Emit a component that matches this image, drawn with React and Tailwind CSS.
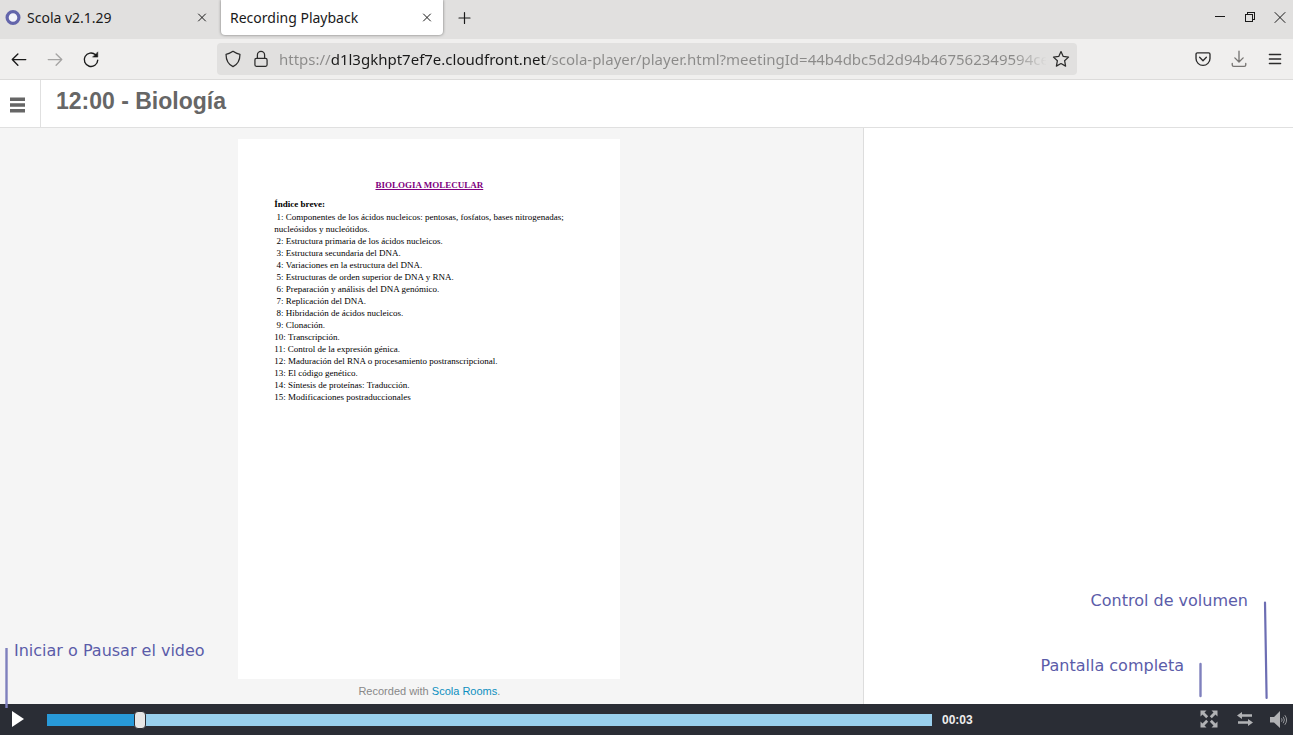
import { useState } from "react";

const chapters = [
  "Componentes de los ácidos nucleicos: pentosas, fosfatos, bases nitrogenadas; nucleósidos y nucleótidos.",
  "Estructura primaria de los ácidos nucleicos.",
  "Estructura secundaria del DNA.",
  "Variaciones en la estructura del DNA.",
  "Estructuras de orden superior de DNA y RNA.",
  "Preparación y análisis del DNA genómico.",
  "Replicación del DNA.",
  "Hibridación de ácidos nucleicos.",
  "Clonación.",
  "Transcripción.",
  "Control de la expresión génica.",
  "Maduración del RNA o procesamiento postranscripcional.",
  "El código genético.",
  "Síntesis de proteínas: Traducción.",
  "Modificaciones postraduccionales",
];

function Icon({ className = "h-4 w-4", width = 1.2, children }) {
  return (
    <svg
      viewBox="0 0 16 16"
      className={className}
      fill="none"
      stroke="currentColor"
      strokeWidth={width}
      strokeLinecap="round"
      strokeLinejoin="round"
      aria-hidden="true"
    >
      {children}
    </svg>
  );
}

function CloseIcon() {
  return (
    <Icon className="block h-4 w-4" width={1}>
      <path d="M4.500 4l7 7M11.500 4l-7 7" />
    </Icon>
  );
}

function TabBar() {
  return (
    <div className="flex h-[39px] shrink-0 items-start bg-[#e1e0df] text-sm text-[#1a1a1a]">
      <div className="flex h-[35px] w-[221px] items-center pr-[11px] pl-[5px]">
        <svg viewBox="0 0 16 16" className="h-4 w-4" aria-hidden="true">
          <circle cx="8" cy="7.500" r="5.900" fill="#f4f4fa" stroke="#6365ab" strokeWidth="3.200" />
        </svg>
        <span className="ml-[6px] flex-1">Scola v2.1.29</span>
        <button aria-label="Cerrar Scola">
          <CloseIcon />
        </button>
      </div>
      <div className="flex h-[35px] w-[222px] items-center rounded-b bg-white pr-2 pl-[9px] shadow-[0_0_3px_rgba(0,0,0,0.5)]">
        <span className="flex-1">Recording Playback</span>
        <button aria-label="Cerrar Recording Playback">
          <CloseIcon />
        </button>
      </div>
      <button className="ml-[13px] flex h-[35px] items-center" aria-label="Nueva pestaña">
        <Icon>
          <path d="M8.500 2.500v11M3 8h11" />
        </Icon>
      </button>
      <div className="ml-auto flex h-[34px] items-center gap-[14px] pr-[5px]">
        <button aria-label="Minimizar">
          <svg viewBox="0 0 16 16" className="block h-4 w-4" shapeRendering="crispEdges" aria-hidden="true">
            <path d="M3 7h10v1H3z" fill="currentColor" />
          </svg>
        </button>
        <button aria-label="Restaurar">
          <svg viewBox="0 0 16 16" className="block h-4 w-4" shapeRendering="crispEdges" fill="none" stroke="currentColor" aria-hidden="true">
            <path d="M3.500 5.500h7v7h-7zM5.500 5.500v-2h7v7h-2" />
          </svg>
        </button>
        <button aria-label="Cerrar ventana">
          <Icon className="block h-4 w-4" width={1}>
            <path d="M3 3.500l10 10M13 3.500l-10 10" />
          </Icon>
        </button>
      </div>
    </div>
  );
}

function AddressBar() {
  return (
    <div className="flex h-[41px] shrink-0 items-center border-b border-[#dcdbda] bg-[#f0efee] text-[#2b2b2b]">
      <div className="flex items-center gap-[18px] pl-[10px]">
        <button aria-label="Atrás">
          <Icon className="block h-[18px] w-[18px] text-[#1a1a1a]">
            <path d="M14 8.500H2M7 3.500l-5 5 5 5" />
          </Icon>
        </button>
        <button aria-label="Adelante" className="text-[#a5a4a3]" disabled>
          <Icon className="block h-[18px] w-[18px]">
            <path d="M2 8.500h12M9 3.500l5 5-5 5" />
          </Icon>
        </button>
        <button aria-label="Recargar">
          <Icon className="block h-[18px] w-[18px] text-[#1a1a1a]">
            <path d="M14 9A6 6 0 1 1 12 4.200" />
            <path d="M14 2v4.300H9.700z" fill="currentColor" strokeWidth="0.500" />
          </Icon>
        </button>
      </div>
      <div className="ml-[117px] flex h-8 w-[860px] items-center rounded bg-[#e1e0df] px-[7px]">
        <Icon className="h-[18px] w-[18px] shrink-0" width={1.1}>
          <path d="M8 1.200C10 2.700 12 3.500 14.200 3.800 14.200 9 12.700 12.600 8 14.800 3.300 12.600 1.800 9 1.800 3.800 4 3.500 6 2.700 8 1.200z" />
        </Icon>
        <Icon className="ml-[10px] h-[18px] w-[18px] shrink-0" width={1.1}>
          <rect x="2.600" y="7.500" width="10.800" height="7" rx="1.300" />
          <path d="M4.800 7.500V4.400a3.200 3.200 0 0 1 6.400 0v3.100" />
        </Icon>
        <input
          type="text"
          aria-label="Dirección"
          defaultValue="https://d1l3gkhpt7ef7e.cloudfront.net/scola-player/player.html?meetingId=44b4dbc5d2d94b467562349594ce"
          className="ml-[9px] min-w-0 flex-1 bg-[linear-gradient(90deg,#8b8a89_52px,#1a1a1a_52px,#1a1a1a_267px,#8b8a89_267px,#8b8a89_735px,transparent_768px)] bg-clip-text text-[15px] text-transparent outline-none"
        />
        <button aria-label="Añadir a marcadores" className="ml-[6px]">
          <Icon className="block h-[18px] w-[18px]" width={1.1}>
            <path d="M8 1.400l2 4.300 4.700.6-3.500 3.200.9 4.800L8 12l-4.100 2.300.9-4.800L1.300 6.300 6 5.700z" />
          </Icon>
        </button>
      </div>
      <div className="ml-auto flex items-center gap-[18px] pr-[9px]">
        <button aria-label="Guardar en Pocket">
          <Icon className="block h-[18px] w-[18px]">
            <path d="M3 2.500h10a1.200 1.200 0 0 1 1.200 1.200V7.500a6.200 6.200 0 0 1-12.400 0V3.700A1.200 1.200 0 0 1 3 2.500z" />
            <path d="M5 6.500l3 3 3-3" />
          </Icon>
        </button>
        <button aria-label="Descargas" className="text-[#777573]">
          <Icon className="block h-[18px] w-[18px]">
            <path d="M8 1v9.500M4.300 7L8 10.700l3.700-3.700M2 12v1.300c0 .8.500 1.200 1.300 1.200h9.400c.8 0 1.300-.4 1.300-1.200V12" />
          </Icon>
        </button>
        <button aria-label="Menú del navegador">
          <Icon className="block h-[18px] w-[18px]">
            <path d="M3 4h10M3 8h10M3 12h10" />
          </Icon>
        </button>
      </div>
    </div>
  );
}

function Slide() {
  return (
    <article className="aspect-[382/540] min-h-0 flex-1 bg-white px-9 pt-10 font-['Liberation_Serif',serif] text-[9px] leading-3 text-black">
      <h2 className="text-center font-bold text-[#800080] underline">BIOLOGIA MOLECULAR</h2>
      <h3 className="mt-[7px] font-bold">Índice breve:</h3>
      <ol className="mt-px">
        {chapters.map((chapter, index) => (
          <li key={chapter} className="whitespace-pre-wrap">
            {`${index + 1}`.padStart(2, " ") + `: ${chapter}`}
          </li>
        ))}
      </ol>
    </article>
  );
}

function PlayerControls() {
  const [position, setPosition] = useState(10);
  const fill = position + 0.5;

  return (
    <div className="flex h-[31px] shrink-0 items-center bg-[#2a2d35] text-[#b1b2b5]">
      <button aria-label="Reproducir" className="ml-[11px] pb-[2px] text-white">
        <svg viewBox="0 0 14 18" className="block h-[18px] w-[14px]" fill="currentColor" aria-hidden="true">
          <path d="M1 1l12 8-12 8z" />
        </svg>
      </button>
      <input
        type="range"
        min="0"
        max="100"
        aria-label="Posición del video"
        value={position}
        onChange={(e) => setPosition(Number(e.target.value))}
        style={{ backgroundImage: `linear-gradient(to right, #289ad9 ${fill}%, #99d0ed ${fill}%)` }}
        className="ml-[22px] h-3 min-w-0 flex-1 appearance-none [&::-webkit-slider-thumb]:h-[18px] [&::-webkit-slider-thumb]:w-3 [&::-webkit-slider-thumb]:appearance-none [&::-webkit-slider-thumb]:rounded [&::-webkit-slider-thumb]:border [&::-webkit-slider-thumb]:border-[#2a2d35] [&::-webkit-slider-thumb]:bg-[#e6e6e6]"
      />
      <span className="ml-[10px] w-[258px] font-['Liberation_Sans',sans-serif] text-xs font-bold text-[#eeeeee]">
        00:03
      </span>
      <div className="flex items-center gap-[17px] pr-[5px] pb-[2px]">
        <button aria-label="Pantalla completa">
          <svg viewBox="0 0 18 18" className="block h-[18px] w-[18px]" fill="currentColor" aria-hidden="true">
            <path d="M.5.500h6L4.500 2.500l3.700 3.700-2 2L2.500 4.500l-2 2zM17.500.500v6l-2-2-3.700 3.700-2-2 3.700-3.700-2-2zM.5 17.500v-6l2 2 3.700-3.700 2 2-3.700 3.700 2 2zM17.500 17.500h-6l2-2-3.700-3.700 2-2 3.700 3.700 2-2z" />
          </svg>
        </button>
        <button aria-label="Intercambiar paneles">
          <svg viewBox="0 0 18 18" className="block h-[18px] w-[18px]" fill="currentColor" aria-hidden="true">
            <path d="M2 5.500L7 2v2.300h10v2.400H7V9zM18 12.500L13 9v2.300H3v2.400h10V16z" />
          </svg>
        </button>
        <button aria-label="Volumen">
          <svg viewBox="0 0 18 18" className="block h-[18px] w-[18px]" fill="currentColor" aria-hidden="true">
            <path d="M0 7h4l6-6v17l-6-5.500H0z" />
            <g fill="none" stroke="currentColor" strokeWidth="0.800">
              <path d="M11.500 8.300q1.300 1.700 0 3.400M13.200 6.800q2.400 3.200 0 6.400M14.800 5.200q3.600 4.800 0 9.600" />
            </g>
          </svg>
        </button>
      </div>
    </div>
  );
}

function Callouts() {
  return (
    <div className="pointer-events-none font-['DejaVu_Sans',sans-serif] text-base text-[#5b5ca9]">
      <p className="absolute bottom-[72px] left-[14px]">Iniciar o Pausar el video</p>
      <svg className="absolute bottom-[26px] left-1 h-[62px] w-1" viewBox="0 0 4 62" aria-hidden="true">
        <path d="M2.500 1v60" stroke="#7f80bd" strokeWidth="2.400" />
      </svg>
      <p className="absolute right-[109px] bottom-[57px]">Pantalla completa</p>
      <svg className="absolute right-[90px] bottom-[37px] h-9 w-1" viewBox="0 0 4 36" aria-hidden="true">
        <path d="M1.500 2v32" stroke="#7f80bd" strokeWidth="2.400" strokeLinecap="round" />
      </svg>
      <p className="absolute right-[45px] bottom-[122px]">Control de volumen</p>
      <svg className="absolute right-6 bottom-[35px] h-[100px] w-[6px]" viewBox="0 0 6 100" aria-hidden="true">
        <path d="M2 2.500l1.600 95.500" stroke="#6d6eb3" strokeWidth="2.200" strokeLinecap="round" />
      </svg>
    </div>
  );
}

export default function App() {
  return (
    <div className="relative flex h-screen flex-col overflow-hidden bg-white font-['Noto_Sans',sans-serif]">
      <TabBar />
      <AddressBar />

      {/* Title bar */}
      <header className="flex h-12 shrink-0 border-b border-[#e0e0e0] text-[#666666]">
        <button aria-label="Menú" className="w-[41px] border-r border-[#e0e0e0] pt-[2px] pl-[10px]">
          <svg viewBox="0 0 15 16" className="block h-4 w-[15px]" fill="currentColor" aria-hidden="true">
            <path d="M0 .500h15v3.500H0zM0 6.200h15v3.600H0zM0 12h15v3.500H0z" />
          </svg>
        </button>
        <h1 className="ml-[15px] pt-[5px] font-['Liberation_Sans',sans-serif] text-[23px] leading-8 font-bold">
          12:00 - Biología
        </h1>
      </header>

      {/* Presentation and side panel */}
      <main className="flex min-h-0 flex-1">
        <section className="flex flex-1 flex-col items-center border-r border-[#dddddd] bg-[#f5f5f5] pt-[11px] pr-1">
          <Slide />
          <p className="flex h-[25px] shrink-0 items-center font-['Liberation_Sans',sans-serif] text-[11px] text-[#888888]">
            <span>
              Recorded with{" "}
              <a href="#" className="text-[#0d8fbf]">
                Scola Rooms
              </a>
              .
            </span>
          </p>
        </section>
        <aside className="w-[33.2%]" />
      </main>

      <PlayerControls />
      <Callouts />
    </div>
  );
}
